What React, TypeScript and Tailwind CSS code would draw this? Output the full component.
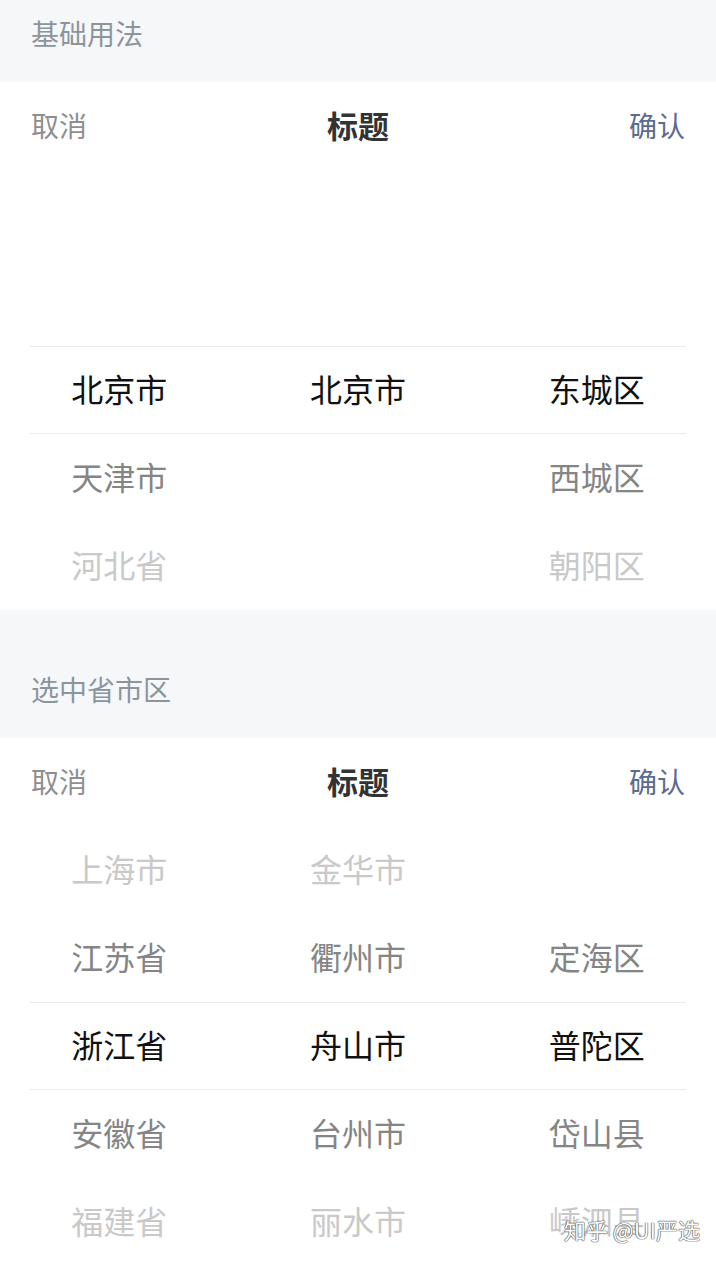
import React from 'react'

type Col = (string | null)[]

const basic: Col[] = [
  [null, null, '北京市', '天津市', '河北省'],
  [null, null, '北京市', null, null],
  [null, null, '东城区', '西城区', '朝阳区'],
]

const selected: Col[] = [
  ['上海市', '江苏省', '浙江省', '安徽省', '福建省'],
  ['金华市', '衢州市', '舟山市', '台州市', '丽水市'],
  [null, '定海区', '普陀区', '岱山县', '嵊泗县'],
]

const tone = ['text-[#c9c9c9]', 'text-[#858585]', 'text-[#111]', 'text-[#858585]', 'text-[#c9c9c9]']

const SectionTitle = ({ title, first }: { title: string; first?: boolean }) => (
  <div className={`bg-[#f6f7f9] px-[31px] ${first ? 'h-[82px] pt-[13px]' : 'h-[128px] pt-[59px]'}`}>
    <div className="text-[28px] leading-[40px] text-[#8c959d]">{title}</div>
  </div>
)

const Picker = ({ columns }: { columns: Col[] }) => (
  <div className="bg-white">
    {/* Toolbar */}
    <div className="h-[88px] flex items-center justify-between px-[31px] pb-[2px]">
      <span className="text-[28px] text-[#8f8f8f]">取消</span>
      <span className="text-[31px] font-bold text-[#333]">标题</span>
      <span className="text-[28px] text-[#5b6b91]">确认</span>
    </div>

    {/* Columns */}
    <div className="relative grid grid-cols-3">
      {columns.map((col, ci) => (
        <div key={ci} className="flex flex-col">
          {col.map((item, ri) => (
            <div key={ri} className={`h-[88px] flex items-center justify-center pb-[4px] text-[32px] ${tone[ri]}`}>
              {item}
            </div>
          ))}
        </div>
      ))}
      <div className="pointer-events-none absolute left-[30px] right-[30px] top-[176px] h-[88px] border-y border-[#ebebeb]" />
    </div>
  </div>
)

export default function App() {
  return (
    <div
      className="relative w-[716px] h-[1264px] overflow-hidden bg-white"
      style={{ fontFamily: '"Noto Sans CJK SC", "Noto Sans", sans-serif' }}
    >
      <SectionTitle title="基础用法" first />
      <Picker columns={basic} />
      <SectionTitle title="选中省市区" />
      <Picker columns={selected} />

      {/* watermark */}
      <div className="absolute right-[16px] bottom-[18px] text-[22px] text-white [text-shadow:0_0_1px_#444,0_0_1px_#444,0_0_1px_#444]">
        知乎 @UI严选
      </div>
    </div>
  )
}
